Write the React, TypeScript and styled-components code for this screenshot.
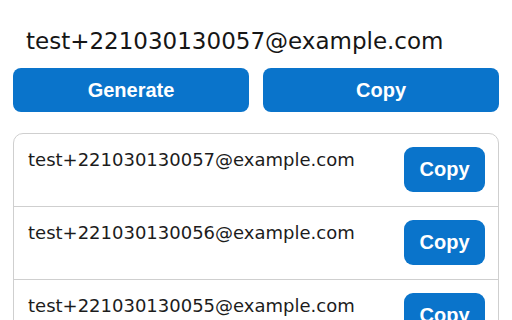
import React from "react";
import styled, { createGlobalStyle } from "styled-components";

const GlobalStyle = createGlobalStyle`
  html, body {
    margin: 0;
    padding: 0;
    background: #ffffff;
    overflow: hidden;
  }
  * { box-sizing: border-box; }
`;

const Page = styled.div`
  width: 512px;
  padding: 26px 13px 13px;
  display: flex;
  flex-direction: column;
  font-family: "DejaVu Sans", "Liberation Sans", sans-serif;
`;

const Title = styled.div`
  padding-left: 13px;
  font-size: 23px;
  line-height: 30px;
  color: #161616;
  white-space: nowrap;
`;

const ButtonRow = styled.div`
  margin-top: 12px;
  display: grid;
  grid-template-columns: 1fr 1fr;
  gap: 14px;
`;

const BlueButton = styled.button<{ $compact?: boolean }>`
  border: none;
  margin: 0;
  padding: 0;
  background: #0a74cb;
  color: #ffffff;
  font-family: "Liberation Sans", Arial, sans-serif;
  font-weight: 700;
  font-size: 20px;
  border-radius: ${(p) => (p.$compact ? "9px" : "8px")};
  height: ${(p) => (p.$compact ? "45px" : "44px")};
  width: ${(p) => (p.$compact ? "81px" : "auto")};
  flex-shrink: 0;
  cursor: pointer;
`;

const List = styled.div`
  margin-top: 21px;
  border: 1px solid #cfcfcf;
  border-radius: 10px;
  display: flex;
  flex-direction: column;
`;

const Row = styled.div`
  display: flex;
  justify-content: space-between;
  align-items: flex-start;
  padding: 13px 13px 14px 14px;
  border-top: 1px solid #cfcfcf;
  &:first-child {
    border-top: none;
  }
`;

const RowText = styled.div`
  font-size: 18px;
  line-height: 26px;
  color: #1c1c1c;
  white-space: nowrap;
`;

const emails = [
  "test+221030130057@example.com",
  "test+221030130056@example.com",
  "test+221030130055@example.com",
];

export default function App() {
  return (
    <>
      <GlobalStyle />
      <Page>
        <Title>test+221030130057@example.com</Title>
        <ButtonRow>
          <BlueButton>Generate</BlueButton>
          <BlueButton>Copy</BlueButton>
        </ButtonRow>
        <List>
          {emails.map((e) => (
            <Row key={e}>
              <RowText>{e}</RowText>
              <BlueButton $compact>Copy</BlueButton>
            </Row>
          ))}
        </List>
      </Page>
    </>
  );
}
